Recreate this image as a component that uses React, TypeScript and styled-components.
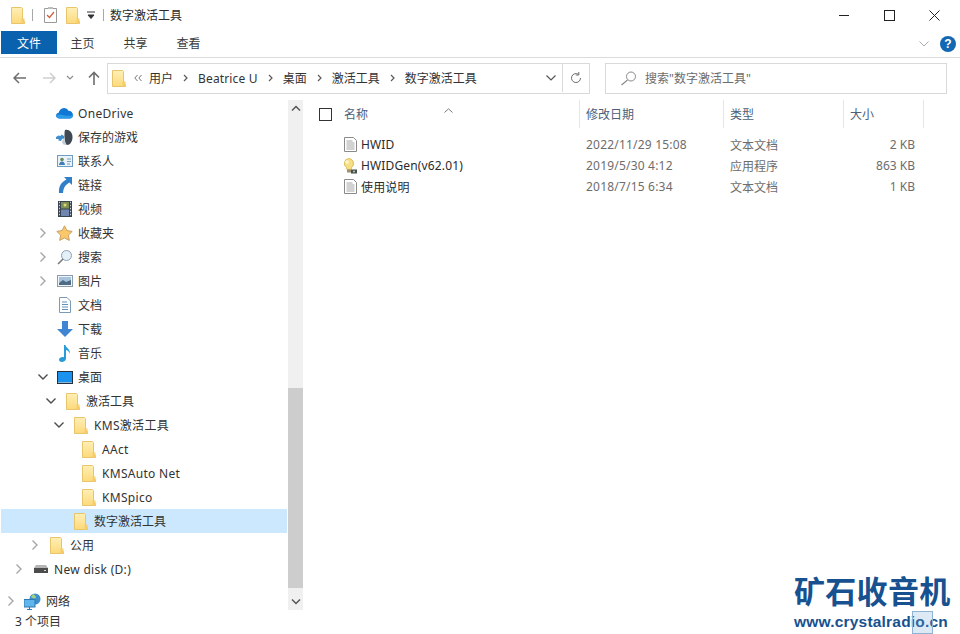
import React from "react";
import styled, { createGlobalStyle } from "styled-components";

const Global = createGlobalStyle`
  html, body { margin: 0; padding: 0; background: #fff; }
  * { box-sizing: border-box; }
`;

const FONT = `"Noto Sans", "Noto Sans CJK SC", sans-serif`;

const Win = styled.div`
  position: relative;
  width: 960px;
  height: 634px;
  overflow: hidden;
  background: #fff;
  font-family: ${FONT};
  font-size: 12px;
  color: #333;
  display: flex;
  flex-direction: column;
`;

const TitleBar = styled.div`
  height: 30px;
  display: flex;
  align-items: center;
  padding-left: 11px;
  flex: none;
`;
const TitleSep = styled.div<{ $ml: number; $mr: number }>`
  width: 1px;
  height: 12px;
  background: #a8a8a8;
  margin: 0 ${(p) => p.$mr}px 0 ${(p) => p.$ml}px;
`;
const QuickGap = styled.div<{ $w: number }>`
  width: ${(p) => p.$w}px;
  flex: none;
`;
const TitleText = styled.div`
  font-size: 12px;
  color: #2b2b2b;
  flex: 1;
`;
const WinButtons = styled.div`
  display: flex;
  align-items: center;
  margin-right: 3px;
`;
const WinButton = styled.div`
  width: 45px;
  height: 30px;
  display: flex;
  align-items: center;
  justify-content: center;
`;

const Ribbon = styled.div`
  height: 28px;
  flex: none;
  display: flex;
  align-items: flex-start;
  padding-top: 1px;
  padding-left: 1px;
  border-bottom: 1px solid #dadbdc;
`;
const FileTab = styled.div`
  width: 56px;
  height: 23px;
  background: #0a62ae;
  color: #fff;
  display: flex;
  align-items: center;
  justify-content: center;
  font-size: 12px;
`;
const RibbonTabs = styled.div`
  display: flex;
  margin-left: -1px;
`;
const RibbonTab = styled.div`
  width: 53px;
  height: 23px;
  display: flex;
  align-items: center;
  justify-content: center;
  font-size: 12px;
  color: #3a3a3a;
`;
const RibbonRight = styled.div`
  margin-left: auto;
  display: flex;
  align-items: center;
  height: 26px;
  gap: 11px;
  padding-right: 4px;
`;

const AddressRow = styled.div`
  height: 42px;
  flex: none;
  display: flex;
  align-items: flex-start;
  padding-top: 5px;
`;
const NavButtons = styled.div`
  width: 107px;
  height: 30px;
  display: flex;
  align-items: center;
  flex: none;
`;
const NavBtn = styled.div<{ $w: number; $ml: number }>`
  width: ${(p) => p.$w}px;
  margin-left: ${(p) => p.$ml}px;
  display: flex;
  justify-content: center;
  flex: none;
`;
const AddressBox = styled.div`
  width: 483px;
  height: 31px;
  border: 1px solid #d9d9d9;
  display: flex;
  align-items: center;
  padding: 0 0 1px 4px;
  flex: none;
`;
const Crumb = styled.span<{ $latin?: boolean }>`
  color: #333;
  font-size: 12px;
  white-space: nowrap;
  letter-spacing: ${(p) => (p.$latin ? "0.15px" : "0")};
`;
const CrumbArrow = styled.span`
  display: inline-flex;
  width: 25px;
  justify-content: center;
`;
const BackCrumbArrow = styled.span`
  display: inline-flex;
  width: 23px;
  justify-content: center;
`;
const AddressEnd = styled.div`
  margin-left: auto;
  display: flex;
  align-items: center;
  height: 100%;
`;
const ComboArrow = styled.div`
  width: 23px;
  display: flex;
  justify-content: center;
`;
const RefreshBox = styled.div`
  width: 27px;
  height: 100%;
  border-left: 1px solid #d9d9d9;
  display: flex;
  align-items: center;
  justify-content: center;
`;
const SearchBox = styled.div`
  width: 342px;
  height: 31px;
  margin-left: 15px;
  border: 1px solid #d9d9d9;
  display: flex;
  align-items: center;
  padding: 0 0 1px 14px;
  gap: 8px;
  color: #6d6d6d;
  font-size: 12px;
  flex: none;
`;

const Main = styled.div`
  flex: 1;
  display: flex;
  min-height: 0;
`;
const NavPane = styled.div`
  width: 288px;
  flex: none;
  padding: 1px 0 0 1px;
`;
const TreeRow = styled.div<{ $depth: number; $sel?: boolean; $gap?: boolean; $latin?: boolean }>`
  height: 24px;
  width: 286px;
  display: flex;
  align-items: center;
  padding-left: ${(p) => p.$depth * 8 + 3}px;
  margin-top: ${(p) => (p.$gap ? 8 : 0)}px;
  background: ${(p) => (p.$sel ? "#cce8ff" : "transparent")};
  font-size: 12px;
  color: #333;
  white-space: nowrap;
  letter-spacing: ${(p) => (p.$latin ? "0.3px" : "0")};
`;
const ChevronSlot = styled.div`
  width: 14px;
  flex: none;
  display: flex;
  justify-content: center;
`;
const IconSlot = styled.div`
  width: 17px;
  margin-left: 6px;
  margin-right: 5px;
  height: 17px;
  flex: none;
  display: flex;
  align-items: center;
  justify-content: center;
`;

const Scrollbar = styled.div`
  width: 15px;
  flex: none;
  display: flex;
  flex-direction: column;
  background: #f0f0f0;
  height: 510px;
`;
const ScrollBtn = styled.div`
  height: 17px;
  flex: none;
  display: flex;
  align-items: center;
  justify-content: center;
`;
const ScrollSpace = styled.div<{ $h: number }>`
  height: ${(p) => p.$h}px;
  flex: none;
`;
const ScrollThumb = styled.div`
  height: 200px;
  background: #cdcdcd;
  flex: none;
`;

const ListPane = styled.div`
  flex: 1;
  display: flex;
  flex-direction: column;
  padding-left: 16px;
  position: relative;
`;
const SortCaret = styled.div`
  position: absolute;
  left: 141px;
  top: 0;
`;
const HeaderRow = styled.div`
  height: 28px;
  display: flex;
  align-items: center;
  color: #4c607a;
  font-size: 12px;
  flex: none;
`;
const CheckBox = styled.div`
  width: 13px;
  height: 13px;
  border: 1px solid #333;
  background: #fff;
  flex: none;
  margin-right: 12px;
`;
const HeaderCell = styled.div<{ $w: number }>`
  width: ${(p) => p.$w}px;
  height: 28px;
  padding-left: 6px;
  display: flex;
  align-items: center;
  border-right: 1px solid #e5e5e5;
  flex: none;
`;
const NameHeader = styled(HeaderCell)`
  padding-left: 0;
`;
const FileList = styled.div`
  padding-top: 6px;
  padding-left: 24px;
`;
const FileRow = styled.div`
  height: 21px;
  display: flex;
  align-items: center;
  color: #6d6d6d;
  font-size: 12px;
`;
const FileIconSlot = styled.div`
  width: 16px;
  margin-left: -1px;
  margin-right: 3px;
  flex: none;
  display: flex;
  justify-content: center;
`;
const FileName = styled.div`
  width: 225px;
  color: #2b2b2b;
  flex: none;
  letter-spacing: 0.15px;
`;
const DateCell = styled.div`
  width: 144px;
  flex: none;
  letter-spacing: 0.2px;
`;
const TypeCell = styled.div`
  width: 120px;
  flex: none;
`;
const SizeCell = styled.div`
  width: 65px;
  text-align: right;
  flex: none;
`;

const StatusBar = styled.div`
  height: 21px;
  flex: none;
  display: flex;
  align-items: center;
  padding: 0 0 5px 15px;
  font-size: 12px;
  color: #333;
`;

const Watermark = styled.div`
  position: absolute;
  left: 794px;
  top: 571px;
  width: 165px;
  color: #17518f;
  font-family: "Liberation Sans", "Noto Sans CJK SC", sans-serif;
  font-weight: 700;
`;
const WmTitle = styled.div`
  font-size: 31px;
  line-height: 37px;
  letter-spacing: 0.3px;
  white-space: nowrap;
  font-family: "Noto Sans CJK SC", sans-serif;
  font-weight: 700;
`;
const WmUrl = styled.div`
  font-size: 15.5px;
  line-height: 18px;
  margin-top: 5px;
  letter-spacing: 0.2px;
  white-space: nowrap;
`;
const WmBox = styled.div`
  position: absolute;
  left: 118px;
  top: 40px;
  width: 21px;
  height: 23px;
  border: 1px solid #8fb3d3;
  background: rgba(120, 170, 215, 0.25);
`;

/* ---------- icons ---------- */
const Folder = () => (
  <svg width="14" height="17" viewBox="0 0 14 17">
    <defs>
      <linearGradient id="fg" x1="0" y1="0" x2="0" y2="1">
        <stop offset="0" stopColor="#fff0b8" />
        <stop offset="1" stopColor="#fcd97a" />
      </linearGradient>
    </defs>
    <path d="M.5.5H10.5L11.5 1.5V14.5L13.5 14.5V16.5H.5Z" fill="url(#fg)" stroke="#e8c46a" />
    <path d="M10.5 11.5H13.5V16.5H10.5Z" fill="#f5cd6c" />
  </svg>
);
const Chevron = ({ open, color = "#a6a6a6" }: { open?: boolean; color?: string }) =>
  open ? (
    <svg width="12" height="12" viewBox="0 0 12 12">
      <path d="M1.5 3.5 6 8 10.5 3.5" fill="none" stroke="#4d4d4d" strokeWidth="1.4" />
    </svg>
  ) : (
    <svg width="12" height="12" viewBox="0 0 12 12">
      <path d="M3.5 1.5 8 6 3.5 10.5" fill="none" stroke={color} strokeWidth="1.4" />
    </svg>
  );
const OneDrive = () => (
  <svg width="17" height="12" viewBox="0 0 17 12">
    <path d="M3.5 11.5C1.5 11.5 0 10.3 0 8.6 0 7 1.2 6 2.7 5.8 3.2 3.3 5.2 1 8 1c2 0 3.6 1.1 4.3 2.7C15 3.6 17 5.6 17 8.2c0 2-1.4 3.3-3.3 3.3Z" fill="#0f78d4" />
    <path d="M0 8.600C1 7.500 4 7 7 8c2 .8 5 1 10 .2-.2 2-1.500 3.300-3.300 3.300H3.500C1.500 11.500 0 10.300 0 8.600Z" fill="#2b9be8" />
  </svg>
);
const Games = () => (
  <svg width="17" height="17" viewBox="0 0 17 17">
    <path d="M9 1c4-1 7.500 2.500 7.500 7S14 16 11 16C8 15 8 3 9 1Z" fill="#3f4954" />
    <path d="M9 1c-1 4-1.500 10 1.500 15-3 0-4.500-1-4.500-4l2-2.500Z" fill="#c3ccd4" />
    <path d="M0 8l2.500-1.500L4.500 7l1-1.500L8 7v2.500L6 10l-1 2-2.500-.5V10H0Z" fill="#3f8fd0" />
  </svg>
);
const Contacts = () => (
  <svg width="16" height="12" viewBox="0 0 16 12">
    <rect x=".5" y=".5" width="15" height="11" fill="#eaf3fa" stroke="#6f9dc0" />
    <circle cx="5" cy="4.5" r="1.8" fill="#6a8a5a" />
    <path d="M2 10c.3-2.400 1.500-3.500 3-3.500S7.700 7.600 8 10Z" fill="#3f7fb5" />
    <path d="M10 4h4M10 6.500h4M10 9h3" stroke="#7d9bb4" />
  </svg>
);
const LinkArrow = () => (
  <svg width="14" height="16" viewBox="0 0 14 16">
    <path d="M6 0h8v8l-2.500-2.500C8 7.500 5.500 10 5 16H1C.500 9 3.500 5 8.500 2.500Z" fill="#2f7fc9" />
  </svg>
);
const Film = () => (
  <svg width="14" height="16" viewBox="0 0 14 16">
    <rect width="14" height="16" fill="#39434f" />
    <rect x="3" y="1" width="8" height="6.500" fill="#7d8f52" />
    <rect x="3" y="8.500" width="8" height="6.500" fill="#6f86b0" />
    <path d="M1 1.500h1M1 4.500h1M1 7.500h1M1 10.500h1M1 13.500h1M12 1.500h1M12 4.500h1M12 7.500h1M12 10.500h1M12 13.500h1" stroke="#c8d2dc" strokeWidth="1.400" />
    <circle cx="7" cy="4" r="1.500" fill="#e3d77a" />
  </svg>
);
const Star = () => (
  <svg width="17" height="16" viewBox="0 0 17 16">
    <path d="M8.500.800l2.400 4.800 5.300.8-3.800 3.700.9 5.300-4.800-2.500-4.800 2.500.9-5.300L.8 6.400l5.300-.8Z" fill="#fbc869" stroke="#c79f63" />
  </svg>
);
const Search = ({ c = "#8aa0b4" }: { c?: string }) => (
  <svg width="16" height="16" viewBox="0 0 16 16">
    <circle cx="9.500" cy="6.500" r="5" fill="#e4f0f8" stroke={c} />
    <path d="M6 10 1 15" stroke="#7b7b7b" strokeWidth="1.600" />
  </svg>
);
const Picture = () => (
  <svg width="16" height="12" viewBox="0 0 16 12">
    <rect x=".5" y=".5" width="15" height="11" fill="#f0f5fa" stroke="#8c9cab" />
    <rect x="2" y="2" width="12" height="8" fill="#a8c4dc" />
    <path d="M2 8l4-3 3 2 5-2v5H2Z" fill="#4f6b85" />
  </svg>
);
const DocBlue = () => (
  <svg width="12" height="16" viewBox="0 0 12 16">
    <path d="M.5.500H8L11.500 4V15.500H.5Z" fill="#fff" stroke="#7c9ab5" />
    <path d="M3 5h5M3 7.500h6M3 10h6M3 12.500h6" stroke="#5f93bd" />
  </svg>
);
const Download = () => (
  <svg width="16" height="16" viewBox="0 0 16 16">
    <path d="M5 0h6v8h5l-8 8-8-8h5Z" fill="#3f85d1" />
  </svg>
);
const Music = () => (
  <svg width="12" height="17" viewBox="0 0 12 17">
    <path d="M5 0h1.500c.3 3 5 4 4.500 9-.5-2-2-3.500-4-4V13.500C7 15.500 5 17 2.800 17 1 17 0 16 0 14.800 0 13 2 12 3.500 12c.6 0 1.100.1 1.500.3Z" fill="#2b9bd8" />
  </svg>
);
const Desktop = () => (
  <svg width="16" height="13" viewBox="0 0 16 13">
    <rect width="16" height="13" fill="#22303f" />
    <rect x="1" y="1" width="14" height="10" fill="#1b93ee" />
    <path d="M1 11h14v1H1Z" fill="#8ab6d8" />
  </svg>
);
const Disk = () => (
  <svg width="14" height="8" viewBox="0 0 14 8">
    <path d="M2 0h10l2 3H0Z" fill="#b5b5b5" />
    <rect y="3" width="14" height="5" fill="#4c4c4c" />
    <rect x="10" y="5" width="2" height="1" fill="#d8d8d8" />
  </svg>
);
const Network = () => (
  <svg width="17" height="17" viewBox="0 0 17 17">
    <circle cx="11" cy="6" r="5.500" fill="#3d8fce" />
    <path d="M9 1c2 1 3 2 3 4-2 1-4 0-5-1Z" fill="#9fd07e" />
    <rect x="0" y="6.500" width="11" height="7.500" fill="#5eb6ec" stroke="#2d79b3" />
    <path d="M5.500 14v2M3 16.500h5" stroke="#2d79b3" />
  </svg>
);
const TextDoc = () => (
  <svg width="13" height="15" viewBox="0 0 13 15">
    <path d="M.5.500H9.500L12.500 3.500V14.500H.5Z" fill="#fff" stroke="#8a8a8a" />
    <path d="M2.500 4h6M2.500 6h8M2.500 8h8M2.500 10h8M2.500 12h8" stroke="#a5a5a5" />
  </svg>
);
const Bulb = () => (
  <svg width="16" height="16" viewBox="0 0 16 16">
    <path d="M6.500.500a5 5 0 0 1 3 9L9 11.500H5L4.500 9.500a5 5 0 0 1 2-9Z" fill="#f7df86" stroke="#dcbc55" />
    <circle cx="5" cy="4" r="1.800" fill="#fff6cf" />
    <rect x="5" y="11.500" width="4" height="3" fill="#9c9270" />
    <path d="M9 11.500h6v4H9Z" fill="#46504a" />
    <circle cx="12" cy="13.500" r="1.100" fill="#b5bfb5" />
  </svg>
);

type TreeItem = {
  label: string;
  depth: number;
  icon: React.ReactNode;
  arrow?: "open" | "closed";
  sel?: boolean;
  gap?: boolean;
};

const tree: TreeItem[] = [
  { label: "OneDrive", depth: 4, icon: <OneDrive /> },
  { label: "保存的游戏", depth: 4, icon: <Games /> },
  { label: "联系人", depth: 4, icon: <Contacts /> },
  { label: "链接", depth: 4, icon: <LinkArrow /> },
  { label: "视频", depth: 4, icon: <Film /> },
  { label: "收藏夹", depth: 4, icon: <Star />, arrow: "closed" },
  { label: "搜索", depth: 4, icon: <Search />, arrow: "closed" },
  { label: "图片", depth: 4, icon: <Picture />, arrow: "closed" },
  { label: "文档", depth: 4, icon: <DocBlue /> },
  { label: "下载", depth: 4, icon: <Download /> },
  { label: "音乐", depth: 4, icon: <Music /> },
  { label: "桌面", depth: 4, icon: <Desktop />, arrow: "open" },
  { label: "激活工具", depth: 5, icon: <Folder />, arrow: "open" },
  { label: "KMS激活工具", depth: 6, icon: <Folder />, arrow: "open" },
  { label: "AAct", depth: 7, icon: <Folder /> },
  { label: "KMSAuto Net", depth: 7, icon: <Folder /> },
  { label: "KMSpico", depth: 7, icon: <Folder /> },
  { label: "数字激活工具", depth: 6, icon: <Folder />, sel: true },
  { label: "公用", depth: 3, icon: <Folder />, arrow: "closed" },
  { label: "New disk (D:)", depth: 1, icon: <Disk />, arrow: "closed" },
  { label: "网络", depth: 0, icon: <Network />, arrow: "closed", gap: true },
];

const crumbs = ["用户", "Beatrice U", "桌面", "激活工具", "数字激活工具"];

const files = [
  { name: "HWID", date: "2022/11/29 15:08", type: "文本文档", size: "2 KB", icon: <TextDoc /> },
  { name: "HWIDGen(v62.01)", date: "2019/5/30 4:12", type: "应用程序", size: "863 KB", icon: <Bulb /> },
  { name: "使用说明", date: "2018/7/15 6:34", type: "文本文档", size: "1 KB", icon: <TextDoc /> },
];

const SmallCrumbArrow = () => (
  <svg width="7" height="8" viewBox="0 0 7 8">
    <path d="M2 1l3 3-3 3" fill="none" stroke="#5a5a5a" strokeWidth="1.200" />
  </svg>
);

const hasLatin = (s: string) => /[A-Za-z]/.test(s);

export default function App() {
  return (
    <Win>
      <Global />
      <TitleBar>
        <Folder />
        <TitleSep $ml={7} $mr={11} />
        <svg width="13" height="16" viewBox="0 0 13 16">
          <path d="M.5 1.500h12v14H.5Z" fill="#fff" stroke="#9a9a9a" />
          <path d="M3 8l2.500 2.500L10 5" fill="none" stroke="#d3603c" strokeWidth="1.300" />
          <rect x="4" y="0" width="5" height="2" fill="#bdbdbd" />
        </svg>
        <QuickGap $w={9} />
        <Folder />
        <QuickGap $w={7} />
        <svg width="8" height="8" viewBox="0 0 8 8">
          <path d="M0 1h8M1 4h6l-3 3.500Z" stroke="#333" fill="#333" strokeWidth="1" />
        </svg>
        <TitleSep $ml={8} $mr={6} />
        <TitleText>数字激活工具</TitleText>
        <WinButtons>
          <WinButton>
            <svg width="11" height="11" viewBox="0 0 11 11"><path d="M0 5.500h10" stroke="#222" /></svg>
          </WinButton>
          <WinButton>
            <svg width="11" height="11" viewBox="0 0 11 11"><rect x=".5" y=".5" width="10" height="10" fill="none" stroke="#222" /></svg>
          </WinButton>
          <WinButton>
            <svg width="11" height="11" viewBox="0 0 11 11"><path d="M.5.500l10 10M10.500.500l-10 10" stroke="#222" /></svg>
          </WinButton>
        </WinButtons>
      </TitleBar>

      <Ribbon>
        <FileTab>文件</FileTab>
        <RibbonTabs>
          <RibbonTab>主页</RibbonTab>
          <RibbonTab>共享</RibbonTab>
          <RibbonTab>查看</RibbonTab>
        </RibbonTabs>
        <RibbonRight>
          <svg width="10" height="6" viewBox="0 0 10 6"><path d="M.5.500 5 5 9.500.500" fill="none" stroke="#a9a9a9" /></svg>
          <svg width="16" height="16" viewBox="0 0 16 16" aria-label="help">
            <circle cx="8" cy="8" r="8" fill="#1468b3" />
            <text x="8" y="12" textAnchor="middle" fontSize="12" fontWeight="700" fill="#fff" fontFamily="Liberation Sans">?</text>
          </svg>
        </RibbonRight>
      </Ribbon>

      <AddressRow>
        <NavButtons>
          <NavBtn $w={14} $ml={13}>
            <svg width="14" height="12" viewBox="0 0 14 12"><path d="M13 6H1.500M6 1 1 6l5 5" fill="none" stroke="#6d6d6d" strokeWidth="1.500" /></svg>
          </NavBtn>
          <NavBtn $w={14} $ml={15}>
            <svg width="14" height="12" viewBox="0 0 14 12"><path d="M1 6h11.500M8 1l5 5-5 5" fill="none" stroke="#cfcfcf" strokeWidth="1.500" /></svg>
          </NavBtn>
          <NavBtn $w={8} $ml={10}>
            <svg width="8" height="6" viewBox="0 0 8 6"><path d="M1 1l3 3 3-3" fill="none" stroke="#8c8c8c" strokeWidth="1.200" /></svg>
          </NavBtn>
          <NavBtn $w={12} $ml={14}>
            <svg width="12" height="14" viewBox="0 0 12 14"><path d="M6 14V1.500M1 6.500l5-5 5 5" fill="none" stroke="#6d6d6d" strokeWidth="1.600" /></svg>
          </NavBtn>
        </NavButtons>
        <AddressBox>
          <Folder />
          <BackCrumbArrow>
            <svg width="8" height="8" viewBox="0 0 8 8"><path d="M3.500 1 .8 4l2.700 3M7.500 1 4.800 4l2.700 3" fill="none" stroke="#777" /></svg>
          </BackCrumbArrow>
          {crumbs.map((c, i) => (
            <React.Fragment key={c}>
              <Crumb $latin={hasLatin(c)}>{c}</Crumb>
              {i < crumbs.length - 1 && (
                <CrumbArrow>
                  <SmallCrumbArrow />
                </CrumbArrow>
              )}
            </React.Fragment>
          ))}
          <AddressEnd>
            <ComboArrow>
              <svg width="10" height="6" viewBox="0 0 10 6"><path d="M.5.500 5 5 9.500.500" fill="none" stroke="#555" strokeWidth="1.200" /></svg>
            </ComboArrow>
            <RefreshBox>
              <svg width="12" height="12" viewBox="0 0 12 12"><path d="M10.500 6A4.500 4.500 0 1 1 8.500 2.300M8.800 0v3h-3" fill="none" stroke="#6d6d6d" /></svg>
            </RefreshBox>
          </AddressEnd>
        </AddressBox>
        <SearchBox>
          <svg width="17" height="15" viewBox="0 0 17 15"><circle cx="11" cy="5.500" r="4.500" fill="none" stroke="#8a8a8a" /><path d="M7.500 9 1.500 14" stroke="#8a8a8a" strokeWidth="1.200" /></svg>
          <span>搜索"数字激活工具"</span>
        </SearchBox>
      </AddressRow>

      <Main>
        <NavPane>
          {tree.map((t) => (
            <TreeRow key={t.label} $depth={t.depth} $sel={t.sel} $gap={t.gap} $latin={hasLatin(t.label)}>
              <ChevronSlot>{t.arrow && <Chevron open={t.arrow === "open"} />}</ChevronSlot>
              <IconSlot>{t.icon}</IconSlot>
              {t.label}
            </TreeRow>
          ))}
        </NavPane>
        <Scrollbar>
          <ScrollBtn>
            <svg width="10" height="7" viewBox="0 0 10 7"><path d="M1 5.500 5 1.500l4 4" fill="none" stroke="#555" strokeWidth="1.500" /></svg>
          </ScrollBtn>
          <ScrollSpace $h={271} />
          <ScrollThumb />
          <ScrollSpace $h={5} />
          <ScrollBtn>
            <svg width="10" height="7" viewBox="0 0 10 7"><path d="M1 1.500 5 5.500l4-4" fill="none" stroke="#555" strokeWidth="1.500" /></svg>
          </ScrollBtn>
        </Scrollbar>
        <ListPane>
          <SortCaret>
            <svg width="9" height="5" viewBox="0 0 9 5"><path d="M.5 4.500 4.500.800l4 3.700" fill="none" stroke="#7a7a7a" /></svg>
          </SortCaret>
          <HeaderRow>
            <CheckBox />
            <NameHeader $w={236}>名称</NameHeader>
            <HeaderCell $w={144}>修改日期</HeaderCell>
            <HeaderCell $w={120}>类型</HeaderCell>
            <HeaderCell $w={80}>大小</HeaderCell>
          </HeaderRow>
          <FileList>
            {files.map((f) => (
              <FileRow key={f.name}>
                <FileIconSlot>{f.icon}</FileIconSlot>
                <FileName>{f.name}</FileName>
                <DateCell>{f.date}</DateCell>
                <TypeCell>{f.type}</TypeCell>
                <SizeCell>{f.size}</SizeCell>
              </FileRow>
            ))}
          </FileList>
        </ListPane>
      </Main>

      <StatusBar>3 个项目</StatusBar>

      <Watermark>
        <WmTitle>矿石收音机</WmTitle>
        <WmUrl>www.crystalradio.cn</WmUrl>
        <WmBox />
      </Watermark>
    </Win>
  );
}
